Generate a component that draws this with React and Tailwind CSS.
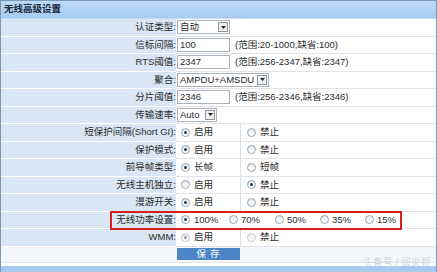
import React from 'react';

const Radio = ({ on, dim }) => (
  <span
    className={`relative inline-block w-[9px] h-[9px] rounded-full border ${
      dim ? 'border-[#c4c9cf]' : 'border-[#9aa3ad]'
    } bg-gradient-to-b from-[#e6e9ed] to-white shrink-0`}
  >
    {on && (
      <span
        className={`absolute left-[2px] top-[2px] w-[3px] h-[3px] rounded-full ${
          dim ? 'bg-[#8a98a8]' : 'bg-[#1f3f63]'
        }`}
      />
    )}
  </span>
);

const Arrow = () => (
  <span className="flex items-center justify-center w-[10px] h-[10px] border border-[#8e96a0] bg-[#eeeeee] shrink-0">
    <svg width="5" height="3" viewBox="0 0 5 3">
      <path d="M0 0 L5 0 L2.5 3 Z" fill="#222" />
    </svg>
  </span>
);

const Select = ({ value, w }) => (
  <div className={`flex items-center justify-between gap-[2px] h-[14px] ${w} border border-[#a9b1bb] bg-white pl-[2px] pr-[1px]`}>
    <span className="whitespace-nowrap">{value}</span>
    <Arrow />
  </div>
);

const Input = ({ value }) => (
  <div className="flex items-center h-[14px] w-[53px] border border-[#a9b1bb] bg-white pl-[2px]">{value}</div>
);

const Row = ({ label, children }) => (
  <div className="flex h-[17.5px]">
    <div className="w-[175px] shrink-0 flex items-center justify-end bg-[#d8e6f5] border-b border-white">
      {label}
    </div>
    <div className="flex-1 flex items-center border-b border-[#e0e4e9] pl-[1px]">{children}</div>
  </div>
);

const Pair = ({ a, b, first, dim }) => (
  <div className="flex h-full w-full items-center">
    <div className="w-[64px] h-full flex items-center gap-[4px] pl-[4px] border-r border-[#dde1e6]">
      <Radio on={first} dim={dim} />
      <span>{a}</span>
    </div>
    <div className="flex items-center gap-[4px] pl-[6px]">
      <Radio on={!first} dim={dim} />
      <span>{b}</span>
    </div>
  </div>
);

export default function App() {
  return (
    <div
      className="relative w-[437px] h-[272px] bg-white text-[9.5px] text-[#2b2b2b] overflow-hidden"
      style={{ fontFamily: '"Liberation Sans", "Noto Sans CJK SC", sans-serif' }}
    >
      <div className="border-x border-t border-[#7d98b6]">
        {/* header */}
        <div className="h-[18px] flex items-center pl-[3px] bg-gradient-to-b from-[#bcdaf6] to-[#a6ccf0] border-b border-[#c9dcee] font-bold text-[#17283a]">
          无线高级设置
        </div>

        <Row label="认证类型:">
          <Select value="自动" w="w-[53px]" />
        </Row>
        <Row label="信标间隔:">
          <Input value="100" />
          <span className="ml-[5px]">(范围:20-1000,缺省:100)</span>
        </Row>
        <Row label="RTS阈值:">
          <Input value="2347" />
          <span className="ml-[5px]">(范围:256-2347,缺省:2347)</span>
        </Row>
        <Row label="聚合:">
          <Select value="AMPDU+AMSDU" w="w-[92px]" />
        </Row>
        <Row label="分片阈值:">
          <Input value="2346" />
          <span className="ml-[5px]">(范围:256-2346,缺省:2346)</span>
        </Row>
        <Row label="传输速率:">
          <Select value="Auto" w="w-[40px]" />
        </Row>
        <Row label="短保护间隔(Short GI):">
          <Pair a="启用" b="禁止" first />
        </Row>
        <Row label="保护模式:">
          <Pair a="启用" b="禁止" first />
        </Row>
        <Row label="前导帧类型:">
          <Pair a="长帧" b="短帧" first />
        </Row>
        <Row label="无线主机独立:">
          <Pair a="启用" b="禁止" first={false} />
        </Row>
        <Row label="漫游开关:">
          <Pair a="启用" b="禁止" first />
        </Row>
        <Row label="无线功率设置:">
          <div className="flex items-center pl-[4px]">
            <Radio on />
            <span className="ml-[4px] w-[35px]">100%</span>
            <Radio />
            <span className="ml-[3px] w-[34px]">70%</span>
            <Radio />
            <span className="ml-[3px] w-[33px]">50%</span>
            <Radio />
            <span className="ml-[3px] w-[33px]">35%</span>
            <Radio />
            <span className="ml-[3px]">15%</span>
          </div>
        </Row>
        <Row label="WMM:">
          <Pair a="启用" b="禁止" first dim />
        </Row>

        {/* save row */}
        <div className="h-[16px] flex items-center bg-[#f3f7fc] border-b border-[#dfe6ee]">
          <div className="w-[176px]" />
          <button className="w-[63px] h-[12px] flex items-center justify-center bg-[#4c86c6] text-white tracking-[4px] pl-[3px] leading-none">
            保存
          </button>
        </div>
        <div className="h-[3px] bg-white" />
        <div className="h-[7px] bg-[#a7caee]" />
      </div>

      {/* highlight box */}
      <div className="absolute left-[110px] top-[211px] w-[292px] h-[19px] border-2 border-[#d6201b]" />

      {/* watermark */}
      <div className="absolute right-[6px] top-[255px] text-[10px] text-[#cfd4da]">头条号 / 阅炎祈</div>
    </div>
  );
}
